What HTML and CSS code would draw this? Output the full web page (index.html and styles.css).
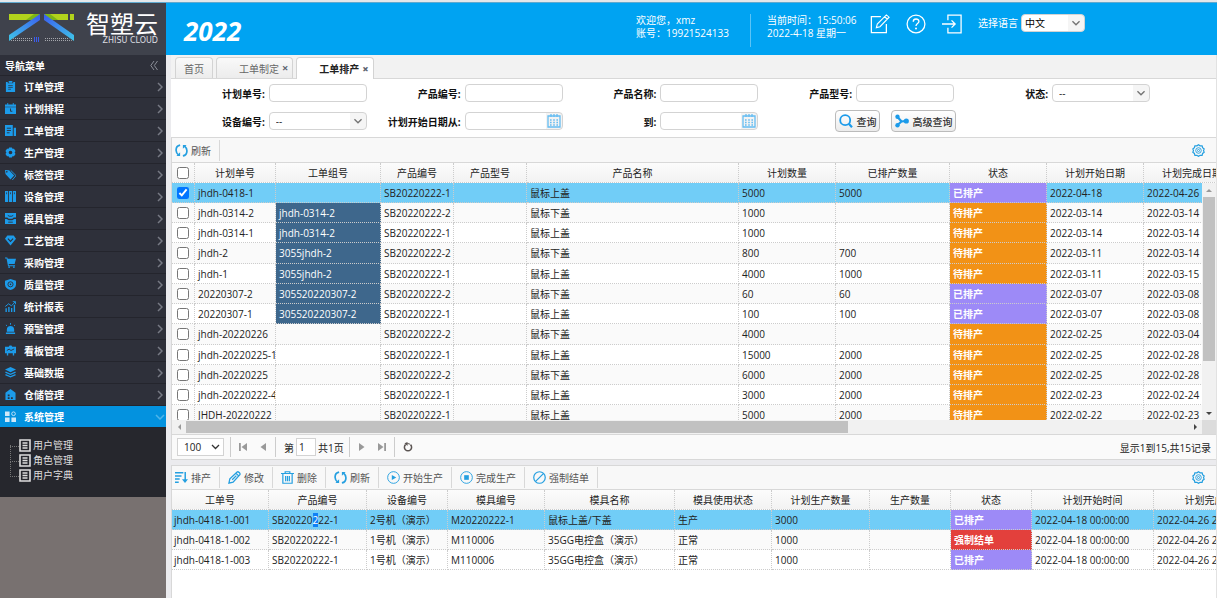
FILE: index.html
```html
<!DOCTYPE html>
<html lang="zh-CN">
<head>
    <meta charset="UTF-8">
    <title>智塑云</title>
    <link rel="stylesheet" href="styles.css">
</head>
<body>

<!-- shared icons -->
<svg class="symbols" aria-hidden="true">
    <symbol id="i-right" viewBox="0 0 6 10"><path d="M1 1l4 4-4 4" fill="none" stroke="currentColor" stroke-width="1.5"/></symbol>
    <symbol id="i-refresh" viewBox="0 0 14 14"><path d="M5.5 1.2C2.8 1.7 1 4 1.2 7c.1 2 1 3.600 2.500 4.800M8.500 12.800c2.700-.5 4.500-2.800 4.300-5.800-.1-2-1-3.600-2.500-4.800" fill="none" stroke="currentColor" stroke-width="1.800"/><path d="M1.500 12.800h4V9zM12.500 1.200h-4V5z" fill="currentColor"/></symbol>
    <symbol id="i-gear" viewBox="0 0 14 14"><path d="M7 .8l1.700 1.200 2.200-.1.500 2.100 1.700 1.300L12.400 7l.7 1.900-1.700 1.300-.5 2.100-2.200-.1L7 13.300l-1.700-1.100-2.200.1-.5-2.100L.9 8.900 1.600 7 .9 5.300 2.600 4l.5-2.100 2.200.1z" fill="none" stroke="currentColor" stroke-width="1.300"/><circle cx="7" cy="7" r="3" fill="none" stroke="currentColor"/><circle cx="7" cy="7" r="1.100" fill="none" stroke="currentColor"/></symbol>
    <symbol id="i-page" viewBox="0 0 12 13"><path d="M1 1h10v11H1z" fill="none" stroke="currentColor" stroke-width="1.600"/><path d="M3.500 4h5M3.500 6.500h5M3.500 9h5" stroke="currentColor" stroke-width="1.400"/></symbol>
</svg>

<header class="top">
    <div class="logo">
        <svg class="logo_mark" viewBox="0 0 66 28" aria-hidden="true">
            <defs>
                <linearGradient id="lg1" x1="1" y1="0" x2="0" y2="1"><stop offset="0" stop-color="#3b5cf0"/><stop offset="1" stop-color="#3fc6e8"/></linearGradient>
                <linearGradient id="lg2" x1="0" y1="0" x2="1" y2="1"><stop offset="0" stop-color="#3b5cf0"/><stop offset="1" stop-color="#3fc6e8"/></linearGradient>
                <pattern id="dots" width="2" height="2" patternUnits="userSpaceOnUse"><rect width="1" height="1" fill="#a5a7ad"/></pattern>
            </defs>
            <path d="M0 0h31l-8 6H0z" fill="#b2d31c"/>
            <path d="M25 0h6l-8 6h-6z" fill="#7cb518"/>
            <path d="M31 0v6L0 27v-6z" fill="url(#lg1)"/>
            <path d="M35 0h24v6H43z" fill="#b2d31c"/>
            <path d="M35 0h6l8 6h-6z" fill="#7cb518"/>
            <path d="M61 0h4v6h-4z" fill="#b2d31c"/>
            <path d="M35 0v6l30 21v-6z" fill="url(#lg2)"/>
            <path d="M6 23h17v5H0zM35 23h23l7 5H35z" fill="url(#dots)"/>
            <path d="M25 23h1v5h-1zM27 23h1v5h-1zM29 23h1v5h-1z" fill="#3b5cf0"/>
        </svg>
        <div class="logo_text">
            <span class="logo_cn">智塑云</span>
            <span class="logo_en">ZHISU CLOUD</span>
        </div>
    </div>
    <div class="banner">
        <span class="year">2022</span>
        <div class="user_info">
            <span>欢迎您，xmz</span>
            <span>账号：19921524133</span>
        </div>
        <div class="time_info">
            <span>当前时间：15:50:06</span>
            <span>2022-4-18 星期一</span>
        </div>
        <div class="top_icons">
            <button type="button" aria-label="修改密码"><svg viewBox="0 0 22 22"><path d="M12 3H1.500v17.500H18V11" fill="none" stroke="#fff" stroke-width="1.400"/><path d="M7 15l1-4L18 1l3 2.500L11 14zM16 3l3 2.500M7 15l4-1" fill="none" stroke="#fff" stroke-width="1.200"/></svg></button>
            <button type="button" aria-label="帮助"><svg viewBox="0 0 22 22"><circle cx="11" cy="11" r="9.800" fill="none" stroke="#fff" stroke-width="1.400"/><path d="M8 8.500c0-4 6.200-3.800 6.200-.3 0 2.400-3.200 2.300-3.200 5" fill="none" stroke="#fff" stroke-width="1.500"/><circle cx="11" cy="16" r="1.100" fill="#fff"/></svg></button>
            <button type="button" aria-label="退出"><svg viewBox="0 0 22 22"><path d="M6.500 7V1.200H21v19.600H6.500V15M0 11h14M10.500 7l4 4-4 4" fill="none" stroke="#fff" stroke-width="1.400"/></svg></button>
        </div>
        <label for="lang">选择语言</label>
        <select id="lang" class="lang"><option>中文</option></select>
    </div>
</header>

<div class="layout">
    <aside class="side">
        <div class="side_title"><span>导航菜单</span><button type="button" aria-label="收起"><svg viewBox="0 0 8 9"><path d="M4 0L.8 4.500 4 9M7.500 0L4.300 4.500l3.200 4.500" fill="none" stroke="#8c8f99"/></svg></button></div>
        <nav class="menu">
            <button type="button"><svg class="mi" viewBox="0 0 12 12"><path d="M1 1h2v1.500h6V1h2v11H1z"/><path d="M4 0h4v2H4z"/><path d="M3.500 5h5M3.500 7h5M3.500 9h3" stroke="#2e303a" stroke-width=".8"/></svg>订单管理<svg class="go"><use href="#i-right"/></svg></button>
            <button type="button"><svg class="mi" viewBox="0 0 12 12"><path d="M0 1.500h2.500V0h1v1.500h5V0h1v1.500H12V4H0zM0 4.700h12V12H0z"/><path d="M6 6v3h2" stroke="#2e303a" fill="none"/></svg>计划排程<svg class="go"><use href="#i-right"/></svg></button>
            <button type="button"><svg class="mi" viewBox="0 0 12 12"><path d="M0 0h8.500v12H0zM9.500 3H12v9H9.500z"/><path d="M2 3.500h4.500M2 6h4.500M2 8.500h3" stroke="#2e303a"/></svg>工单管理<svg class="go"><use href="#i-right"/></svg></button>
            <button type="button"><svg class="mi" viewBox="0 0 12 12"><path fill-rule="evenodd" d="M4.500.5h3l.6 1.500 1.700-.2L11.500 4.400l-1 1.600 1 1.600-1.700 2.600-1.700-.2-.6 1.500h-3L3.900 10l-1.700.2L.5 7.600l1-1.600-1-1.600 1.700-2.600 1.700.2zM6 4a2 2 0 100 4 2 2 0 000-4z"/></svg>生产管理<svg class="go"><use href="#i-right"/></svg></button>
            <button type="button"><svg class="mi" viewBox="0 0 12 12"><path fill-rule="evenodd" d="M0 1l4.500.3L10 7l-4 4.500L.5 5.500zM2 2.200a.9.9 0 100 1.800.9.900 0 000-1.800z"/><path d="M6.300 1.500L12 7.200 8 12" fill="none" stroke="#1c9bea"/></svg>标签管理<svg class="go"><use href="#i-right"/></svg></button>
            <button type="button"><svg class="mi" viewBox="0 0 12 12"><path d="M0 0h3.400v12H0zM4.300 0h3.400v12H4.300zM8.600 0H12v12H8.600z"/><path d="M1.700 1.500v2M6 1.500v2M10.300 1.500v2" stroke="#2e303a" stroke-width=".8"/></svg>设备管理<svg class="go"><use href="#i-right"/></svg></button>
            <button type="button"><svg class="mi" viewBox="0 0 12 12"><path d="M0 0h12v5H9.500L8 6.200H4L2.500 5H0zM0 6.500h2L4 8h4l2-1.500h2V12H0z"/><path d="M3 2.500l1.500 1h3l1.500-1M3.500 10h5" stroke="#2e303a" fill="none"/></svg>模具管理<svg class="go"><use href="#i-right"/></svg></button>
            <button type="button"><svg class="mi" viewBox="0 0 12 12"><path d="M2.500.5h7L12 4 6 11.500 0 4z"/><path d="M3.200 4L6 7l2.800-3" stroke="#2e303a" stroke-width="1.200" fill="none"/></svg>工艺管理<svg class="go"><use href="#i-right"/></svg></button>
            <button type="button"><svg class="mi" viewBox="0 0 12 12"><path d="M0 .5h2.500L3 2h9l-1.500 5.500H4L4.300 9H11v1H3.300L1.700 1.500H0z"/><circle cx="4.500" cy="11" r="1"/><circle cx="9.700" cy="11" r="1"/></svg>采购管理<svg class="go"><use href="#i-right"/></svg></button>
            <button type="button"><svg class="mi" viewBox="0 0 12 12"><path d="M6 0l6 2v4c0 3-2.500 5-6 6C2.500 11 0 9 0 6V2z"/><circle cx="6" cy="5.800" r="2.800" fill="none" stroke="#2e303a"/><circle cx="6" cy="5.800" r=".9" fill="#2e303a"/></svg>质量管理<svg class="go"><use href="#i-right"/></svg></button>
            <button type="button"><svg class="mi" viewBox="0 0 12 12"><path d="M.5 8H2v4H.5zM3.500 6.500H5V12H3.500zM6.500 7.500H8V12H6.500zM9.500 4H11v8H9.500z"/><path d="M.3 6L4 3l3 2.300L11 1M8.500.7H11.500V3.500" fill="none" stroke="#1c9bea"/></svg>统计报表<svg class="go"><use href="#i-right"/></svg></button>
            <button type="button"><svg class="mi" viewBox="0 0 12 12"><path d="M2 9.500V7c0-5 8-5 8 0v2.500zM1 10.300h10V12H1zM5.500 0h1v2h-1z"/><path d="M1 2l1.200 1.200M11 2L9.800 3.200" stroke="#1c9bea"/></svg>预警管理<svg class="go"><use href="#i-right"/></svg></button>
            <button type="button"><svg class="mi" viewBox="0 0 12 12"><path d="M0 2h4l1-1.500h2L8 2h4v7H0zM2 9h1.500v2.500H2zM8.500 9H10v2.500H8.500z"/><path d="M2 6l2.500-1.500L6.500 6 10 4.300" stroke="#2e303a" fill="none"/></svg>看板管理<svg class="go"><use href="#i-right"/></svg></button>
            <button type="button"><svg class="mi" viewBox="0 0 12 12"><path d="M6 0l6 2.800-6 2.800L0 2.800z"/><path d="M.5 5.500L6 8l5.500-2.500M.5 8.300L6 10.800l5.500-2.500" fill="none" stroke="#1c9bea" stroke-width="1.400"/></svg>基础数据<svg class="go"><use href="#i-right"/></svg></button>
            <button type="button"><svg class="mi" viewBox="0 0 12 12"><path d="M6 0l5.500 4v8H.5V4z"/><path d="M3 6h2v1.800H3zM3 9h2v1.800H3zM6.500 9h2v1.800h-2z" fill="#2e303a"/></svg>仓储管理<svg class="go"><use href="#i-right"/></svg></button>
            <button type="button" class="open"><svg class="mi" viewBox="0 0 12 12"><path d="M0 .5h5v5H0zM0 7h5v5H0zM7 7h5v5H7z"/><circle cx="9.300" cy="3" r="2" fill="none" stroke="#cfe8f8"/></svg>系统管理<svg class="go down"><use href="#i-right"/></svg></button>
        </nav>
        <ul class="tree">
            <li><a href="#"><svg><use href="#i-page"/></svg>用户管理</a></li>
            <li><a href="#"><svg><use href="#i-page"/></svg>角色管理</a></li>
            <li><a href="#"><svg><use href="#i-page"/></svg>用户字典</a></li>
        </ul>
    </aside>

    <main class="main">
        <div class="tabs">
            <button type="button" class="tab">首页</button>
            <button type="button" class="tab closable">工单制定<b>×</b></button>
            <button type="button" class="tab closable active">工单排产<b>×</b></button>
        </div>

        <form class="search">
            <div class="field"><label for="plan_no">计划单号:</label><input type="text" id="plan_no"></div>
            <div class="field"><label for="prod_no">产品编号:</label><input type="text" id="prod_no"></div>
            <div class="field"><label for="prod_name">产品名称:</label><input type="text" id="prod_name"></div>
            <div class="field"><label for="prod_type">产品型号:</label><input type="text" id="prod_type"></div>
            <div class="field"><label for="state">状态:</label><select id="state"><option>--</option></select></div>
            <div class="field"><label for="device">设备编号:</label><select id="device"><option>--</option></select></div>
            <div class="field"><label for="date_from">计划开始日期从:</label><input type="text" id="date_from" class="date"></div>
            <div class="field"><label for="date_to">到:</label><input type="text" id="date_to" class="date"></div>
            <div class="search_buttons">
                <button type="button"><svg viewBox="0 0 14 14"><circle cx="6.200" cy="6.200" r="5" fill="none" stroke="#1c9bea" stroke-width="1.800"/><path d="M9.800 9.800L13 13.200" stroke="#1c9bea" stroke-width="2.200"/></svg>查询</button>
                <button type="button"><svg viewBox="0 0 14 14"><path d="M2.500 3l4 4.500-4 3.500M6.500 7.500L12 6.800" fill="none" stroke="#1c9bea" stroke-width="2.200"/><circle cx="2.500" cy="2.800" r="2.200" fill="#1c9bea"/><circle cx="2.500" cy="11.300" r="2.200" fill="#1c9bea"/><circle cx="11.300" cy="7" r="2.600" fill="#1c9bea"/></svg>高级查询</button>
            </div>
        </form>

        <section class="panel plans">
            <div class="toolbar">
                <button type="button"><svg><use href="#i-refresh"/></svg>刷新</button>
                <button type="button" class="setting" aria-label="设置"><svg><use href="#i-gear"/></svg></button>
            </div>
            <div class="grid_head">
                <table class="grid plan_grid">
                    <colgroup><col class="w23"><col class="w81"><col class="w105"><col class="w73"><col class="w73"><col class="w212"><col class="w97"><col class="w114"><col class="w97"><col class="w97"><col class="w97"></colgroup>
                    <thead><tr><th><input type="checkbox" aria-label="全选"></th><th>计划单号</th><th>工单组号</th><th>产品编号</th><th>产品型号</th><th>产品名称</th><th>计划数量</th><th>已排产数量</th><th>状态</th><th>计划开始日期</th><th>计划完成日期</th></tr></thead>
                </table>
            </div>
            <div class="grid_body">
                <div class="grid_view">
                    <table class="grid plan_grid">
                        <colgroup><col class="w23"><col class="w81"><col class="w105"><col class="w73"><col class="w73"><col class="w212"><col class="w97"><col class="w114"><col class="w97"><col class="w97"><col class="w97"></colgroup>
                        <tbody>
                        <tr class="selected"><td><input type="checkbox" aria-label="选择" checked></td><td>jhdh-0418-1</td><td></td><td>SB20220222-1</td><td></td><td>鼠标上盖</td><td>5000</td><td>5000</td><td class="done">已排产</td><td>2022-04-18</td><td>2022-04-26</td></tr>
                        <tr><td><input type="checkbox" aria-label="选择"></td><td>jhdh-0314-2</td><td class="group">jhdh-0314-2</td><td>SB20220222-2</td><td></td><td>鼠标下盖</td><td>1000</td><td></td><td class="wait">待排产</td><td>2022-03-14</td><td>2022-03-14</td></tr>
                        <tr><td><input type="checkbox" aria-label="选择"></td><td>jhdh-0314-1</td><td class="group">jhdh-0314-2</td><td>SB20220222-1</td><td></td><td>鼠标上盖</td><td>1000</td><td></td><td class="wait">待排产</td><td>2022-03-14</td><td>2022-03-14</td></tr>
                        <tr><td><input type="checkbox" aria-label="选择"></td><td>jhdh-2</td><td class="group">3055jhdh-2</td><td>SB20220222-2</td><td></td><td>鼠标下盖</td><td>800</td><td>700</td><td class="wait">待排产</td><td>2022-03-11</td><td>2022-03-14</td></tr>
                        <tr><td><input type="checkbox" aria-label="选择"></td><td>jhdh-1</td><td class="group">3055jhdh-2</td><td>SB20220222-1</td><td></td><td>鼠标上盖</td><td>4000</td><td>1000</td><td class="wait">待排产</td><td>2022-03-11</td><td>2022-03-15</td></tr>
                        <tr><td><input type="checkbox" aria-label="选择"></td><td>20220307-2</td><td class="group">305520220307-2</td><td>SB20220222-2</td><td></td><td>鼠标下盖</td><td>60</td><td>60</td><td class="done">已排产</td><td>2022-03-07</td><td>2022-03-08</td></tr>
                        <tr><td><input type="checkbox" aria-label="选择"></td><td>20220307-1</td><td class="group">305520220307-2</td><td>SB20220222-1</td><td></td><td>鼠标上盖</td><td>100</td><td>100</td><td class="done">已排产</td><td>2022-03-07</td><td>2022-03-08</td></tr>
                        <tr><td><input type="checkbox" aria-label="选择"></td><td>jhdh-20220226</td><td></td><td>SB20220222-2</td><td></td><td>鼠标下盖</td><td>4000</td><td></td><td class="wait">待排产</td><td>2022-02-25</td><td>2022-03-04</td></tr>
                        <tr><td><input type="checkbox" aria-label="选择"></td><td>jhdh-20220225-1</td><td></td><td>SB20220222-1</td><td></td><td>鼠标上盖</td><td>15000</td><td>2000</td><td class="wait">待排产</td><td>2022-02-25</td><td>2022-02-28</td></tr>
                        <tr><td><input type="checkbox" aria-label="选择"></td><td>jhdh-20220225</td><td></td><td>SB20220222-2</td><td></td><td>鼠标下盖</td><td>6000</td><td>2000</td><td class="wait">待排产</td><td>2022-02-25</td><td>2022-02-28</td></tr>
                        <tr><td><input type="checkbox" aria-label="选择"></td><td>jhdh-20220222-4</td><td></td><td>SB20220222-1</td><td></td><td>鼠标上盖</td><td>3000</td><td>2000</td><td class="wait">待排产</td><td>2022-02-23</td><td>2022-02-24</td></tr>
                        <tr><td><input type="checkbox" aria-label="选择"></td><td>JHDH-20220222</td><td></td><td>SB20220222-1</td><td></td><td>鼠标上盖</td><td>5000</td><td>2000</td><td class="wait">待排产</td><td>2022-02-22</td><td>2022-02-23</td></tr>
                        </tbody>
                    </table>
                </div>
                <div class="vscroll"><i class="arrow up"></i><span></span><i class="arrow dn"></i></div>
            </div>
            <div class="hscroll"><i class="arrow lt"></i><div class="track"><span></span></div><i class="arrow rt"></i><b></b></div>
            <div class="pager">
                <select class="page_size" aria-label="每页条数"><option>100</option></select>
                <div class="pager_group">
                    <button type="button" aria-label="首页"><svg viewBox="0 0 8 8"><path d="M0 0h1.800v8H0zM8 0v8L2.500 4z"/></svg></button>
                    <button type="button" aria-label="上一页"><svg viewBox="0 0 8 8"><path d="M7 0v8L1.500 4z"/></svg></button>
                </div>
                <div class="pager_group page_input"><label for="page_no">第</label><input type="text" id="page_no" value="1"><span>共1页</span></div>
                <div class="pager_group">
                    <button type="button" aria-label="下一页"><svg viewBox="0 0 8 8"><path d="M1 0v8l5.500-4z"/></svg></button>
                    <button type="button" aria-label="末页"><svg viewBox="0 0 8 8"><path d="M0 0v8l5.500-4zM6.200 0H8v8H6.200z"/></svg></button>
                </div>
                <div class="pager_group">
                    <button type="button" class="reload" aria-label="刷新"><svg viewBox="0 0 10 10"><path d="M7.500 2.600A3.600 3.600 0 112.500 2.600" fill="none" stroke="#5b5452" stroke-width="1.500"/><path d="M2.500 2.600C4 1.400 6 1.400 7 2.300" fill="none" stroke="#5b5452"/><path d="M4.500 0v4L1.500 1.200z" fill="#5b5452"/></svg></button>
                </div>
                <span class="total">显示1到15,共15记录</span>
            </div>
        </section>

        <section class="panel orders">
            <div class="toolbar">
                <button type="button"><svg viewBox="0 0 14 14"><path d="M0 2h9M0 5.300h7M0 8.600h5M0 12h4M11 1v9" fill="none" stroke="currentColor" stroke-width="1.600"/><path d="M7.500 9h6.500l-3.200 4z" fill="currentColor"/></svg>排产</button>
                <button type="button"><svg viewBox="0 0 14 14"><path d="M1 13l1-4.500L9.800 1c1.200-.8 3.800 1.500 3 3L5.500 12zM8.500 2.500l3.300 3M4.500 9.500L9 5" fill="none" stroke="currentColor" stroke-width="1.400"/></svg>修改</button>
                <button type="button"><svg viewBox="0 0 14 14"><path d="M0 2.700h14M4.500 2.500V.8h5v1.700M2 3v10.200h10V3M5 5.500v5.500M7 5.500v5.500M9 5.500v5.500" fill="none" stroke="currentColor" stroke-width="1.300"/></svg>删除</button>
                <button type="button"><svg><use href="#i-refresh"/></svg>刷新</button>
                <button type="button"><svg viewBox="0 0 14 14"><circle cx="7" cy="7" r="6.300" fill="none" stroke="currentColor"/><path d="M5.200 4.200v5.600L10 7z" fill="currentColor"/></svg>开始生产</button>
                <button type="button"><svg viewBox="0 0 14 14"><circle cx="7" cy="7" r="6.300" fill="none" stroke="currentColor"/><path d="M4.500 4.500h5v5h-5z" fill="currentColor"/></svg>完成生产</button>
                <button type="button"><svg viewBox="0 0 14 14"><circle cx="7" cy="7" r="6.200" fill="none" stroke="currentColor" stroke-width="1.300"/><path d="M2.800 11.200l8.400-8.400" stroke="currentColor" stroke-width="1.300"/></svg>强制结单</button>
                <button type="button" class="setting" aria-label="设置"><svg><use href="#i-gear"/></svg></button>
            </div>
            <div class="grid_view">
                <table class="grid order_grid">
                    <colgroup><col class="w97"><col class="w98"><col class="w81"><col class="w97"><col class="w130"><col class="w97"><col class="w98"><col class="w81"><col class="w81"><col class="w122"><col class="w122"></colgroup>
                    <thead><tr><th>工单号</th><th>产品编号</th><th>设备编号</th><th>模具编号</th><th>模具名称</th><th>模具使用状态</th><th>计划生产数量</th><th>生产数量</th><th>状态</th><th>计划开始时间</th><th>计划完成时间</th></tr></thead>
                    <tbody>
                    <tr class="selected"><td>jhdh-0418-1-001</td><td>SB20220<mark>2</mark>22-1</td><td>2号机（演示）</td><td>M20220222-1</td><td>鼠标上盖/下盖</td><td>生产</td><td>3000</td><td></td><td class="done">已排产</td><td>2022-04-18 00:00:00</td><td>2022-04-26 23:59:59</td></tr>
                    <tr><td>jhdh-0418-1-002</td><td>SB20220222-1</td><td>1号机（演示）</td><td>M110006</td><td>35GG电控盒（演示）</td><td>正常</td><td>1000</td><td></td><td class="forced">强制结单</td><td>2022-04-18 00:00:00</td><td>2022-04-26 23:59:59</td></tr>
                    <tr><td>jhdh-0418-1-003</td><td>SB20220222-1</td><td>1号机（演示）</td><td>M110006</td><td>35GG电控盒（演示）</td><td>正常</td><td>1000</td><td></td><td class="done">已排产</td><td>2022-04-18 00:00:00</td><td>2022-04-26 23:59:59</td></tr>
                    </tbody>
                </table>
            </div>
        </section>
    </main>
</div>

</body>
</html>
```

FILE: styles.css
```css
* {
    box-sizing: border-box;
}

html, body {
    height: 100%;
    margin: 0;
}

body {
    display: flex;
    flex-direction: column;
    border-top: 2px solid #e4e7ea;
    font-family: "Open Sans", "Noto Sans CJK SC", sans-serif;
    font-size: 10px;
    color: #222;
    overflow: hidden;
}

button, input, select {
    font: inherit;
    color: inherit;
    margin: 0;
}

button {
    padding: 0;
    border: none;
    background: none;
    white-space: nowrap;
}

svg {
    display: block;
    flex: none;
}

.symbols {
    position: absolute;
    width: 0;
    height: 0;
}

/* header */
.top {
    display: flex;
    flex: none;
    height: 53px;
    border-top: 1px solid #5fa9cf;
    background-color: #00a3f2;
}

.logo {
    display: flex;
    gap: 11px;
    width: 166px;
    padding: 9px 8px 0 9px;
    background-color: #3f424c;
}

.logo_mark {
    width: 66px;
    height: 28px;
    margin-top: 2px;
}

.logo_text {
    display: flex;
    flex-direction: column;
    color: #fff;
}

.logo_cn {
    font-size: 24px;
    line-height: 24px;
}

.logo_en {
    font-family: "DejaVu Sans", sans-serif;
    font-size: 8px;
    line-height: 10px;
    text-align: right;
    color: #dcdde0;
}

.banner {
    display: flex;
    flex: 1;
    align-items: flex-start;
    padding: 11px 132px 0 18px;
    color: #fff;
}

.year {
    margin: 0 auto 0 0;
    font-size: 26px;
    line-height: 34px;
    font-weight: bold;
    font-style: italic;
}

.user_info, .time_info {
    display: flex;
    flex-direction: column;
    width: 114px;
    height: 33px;
    line-height: 13px;
}

.time_info {
    width: 120px;
    padding-left: 16px;
    border-left: 1px solid #5cc4f6;
}

.top_icons {
    display: flex;
    gap: 16px;
    padding-right: 16px;
}

.top_icons svg {
    width: 20px;
    height: 20px;
}

.banner label {
    width: 43px;
    line-height: 18px;
}

select {
    appearance: none;
    height: 18px;
    padding: 0 6px;
    border: 1px solid #d3d3d3;
    border-radius: 4px;
    outline: none;
    background: #fff url("data:image/svg+xml,%3Csvg xmlns='http://www.w3.org/2000/svg' viewBox='0 0 18 18'%3E%3Cpath fill='%23f5f5f5' d='M0 0h18v18H0z'/%3E%3Cpath d='M5 7l4 4 4-4' fill='none' stroke='%23777' stroke-width='1.6'/%3E%3C/svg%3E") right center / 16px 16px no-repeat;
}

.lang {
    width: 64px;
    padding: 0 3px;
    color: #000;
}

.layout {
    display: flex;
    flex: 1;
    min-height: 0;
}

/* left menu */
.side {
    flex: none;
    width: 166px;
    background-color: #787170;
    color: #fff;
}

.side_title {
    display: flex;
    align-items: center;
    justify-content: space-between;
    height: 21px;
    padding: 0 8px 0 5px;
    background-color: #2e303a;
    border-bottom: 1px solid #24252d;
    font-weight: bold;
}

.side_title svg {
    width: 8px;
    height: 9px;
}

.menu button {
    display: flex;
    align-items: center;
    width: 100%;
    height: 22px;
    padding: 0 3px 0 5px;
    background-color: #2e303a;
    border-bottom: 1px solid #24252d;
    font-weight: bold;
}

.menu .mi {
    width: 11px;
    height: 11px;
    margin-right: 8px;
    fill: #1c9bea;
}

.menu .go {
    width: 6px;
    height: 10px;
    margin-left: auto;
    color: #777a84;
}

.menu .open {
    background-color: #0392df;
}

.menu .open .mi {
    fill: #cfe8f8;
}

.menu .down {
    transform: rotate(90deg);
    color: #4fb5ea;
}

.tree {
    margin: 0;
    padding: 10px 0 14px 19px;
    list-style: none;
    background-color: #26272d;
}

.tree li {
    position: relative;
    height: 15px;
}

/* connector lines of the tree */
.tree li::before {
    content: "";
    position: absolute;
    left: -9px;
    top: -7px;
    width: 8px;
    height: 15px;
    border-left: 1px dotted #777;
    border-bottom: 1px dotted #777;
}

.tree li:first-child::before {
    top: 7px;
    height: 1px;
}

.tree a {
    display: flex;
    align-items: center;
    gap: 2px;
    line-height: 15px;
    color: #ddd;
    text-decoration: none;
}

.tree svg {
    width: 12px;
    height: 13px;
}

/* main area */
.main {
    display: flex;
    flex: 1;
    flex-direction: column;
    min-width: 0;
    border-left: 5px solid #ebebee;
    border-right: 1px solid #e2e2e2;
    background-color: #fff;
}

.tabs {
    display: flex;
    flex: none;
    align-items: flex-end;
    gap: 3px;
    height: 24px;
    padding-left: 4px;
    border-bottom: 1px solid #d8d8d8;
    background-color: #f2f2f2;
}

.tab {
    height: 21px;
    padding: 0 8px;
    border: 1px solid #d3d3d3;
    border-bottom: none;
    border-radius: 4px 4px 0 0;
    background-image: linear-gradient(#f9f9f9, #ececec);
    color: #666;
}

.closable {
    display: flex;
    align-items: center;
    gap: 3px;
    padding: 0 4px 0 22px;
}

.closable b {
    font-size: 11px;
    line-height: 12px;
    color: #5d6470;
}

.tab.active {
    height: 22px;
    margin-bottom: -1px;
    background: #fff;
    color: #222;
    font-weight: bold;
}

.search {
    display: grid;
    grid-template-columns: repeat(5, 1fr);
    align-content: start;
    flex: none;
    gap: 10px 0;
    height: 59px;
    padding: 5px 66px 0 0;
    border-bottom: 1px solid #d8d8d8;
}

.field {
    display: flex;
    align-items: center;
    justify-content: flex-end;
    gap: 4px;
    height: 18px;
}

.field label {
    font-weight: bold;
    color: #111;
}

.field input, .field select {
    width: 98px;
    height: 18px;
    border: 1px solid #d3d3d3;
    border-radius: 4px;
    outline: none;
}

.field .date {
    background: url("data:image/svg+xml,%3Csvg xmlns='http://www.w3.org/2000/svg' viewBox='0 0 16 16'%3E%3Cpath fill='%23f3f3f3' d='M0 0h16v16H0z'/%3E%3Cpath d='M2 3h12v11H2zM5 1v3M8 1v3M11 1v3' fill='none' stroke='%2365bdf2' stroke-width='1.3'/%3E%3Cpath d='M4 7h8M4 9.500h8M4 12h8' stroke='%2365bdf2' stroke-width='1.3' stroke-dasharray='1.600 1.600'/%3E%3C/svg%3E") right center / 16px 16px no-repeat;
}

.search_buttons {
    display: flex;
    grid-column: 4 / 6;
    gap: 11px;
    height: 22px;
    margin: -2px 0;
    padding-left: 77px;
}

.search_buttons button {
    display: flex;
    align-items: center;
    gap: 3px;
    padding: 0 3px;
    border: 1px solid #bbb;
    border-radius: 4px;
    background-image: linear-gradient(#fff, #ececec);
    color: #333;
    font-weight: 500;
}

.search_buttons svg {
    width: 14px;
    height: 14px;
}

.panel {
    display: flex;
    flex-direction: column;
    border-left: 1px solid #d8d8d8;
}

.plans {
    flex: 1;
    min-height: 0;
}

.orders {
    flex: none;
    min-height: 133px;
    margin-top: 5px;
    border-top: 1px solid #d8d8d8;
    box-shadow: 0 -5px 0 #ebebee;
}

.toolbar {
    display: flex;
    flex: none;
    align-items: center;
    height: 25px;
    border-bottom: 1px solid #d8d8d8;
    background-color: #f8f8f8;
}

.orders .toolbar {
    height: 24px;
}

.toolbar button {
    display: flex;
    align-items: center;
    gap: 3px;
    height: 21px;
    padding: 0 8px;
    border-right: 1px solid #d8d8d8;
    color: #555;
}

.toolbar button:first-child {
    padding-left: 3px;
}

.toolbar svg {
    width: 13px;
    height: 13px;
    color: #249fe0;
}

.toolbar .setting {
    margin-left: auto;
    padding-right: 11px;
    border: none;
}

/* data grids */
.grid {
    table-layout: fixed;
    border-spacing: 0;
}

.plan_grid {
    width: 1069px;
}

.order_grid {
    width: 1104px;
}

.w23 { width: 23px; }
.w73 { width: 73px; }
.w81 { width: 81px; }
.w97 { width: 97px; }
.w98 { width: 98px; }
.w105 { width: 105px; }
.w114 { width: 114px; }
.w122 { width: 122px; }
.w130 { width: 130px; }
.w212 { width: 212px; }

.grid th, .grid td {
    height: 20px;
    padding: 0 3px;
    border-right: 1px dotted #ccc;
    border-bottom: 1px dotted #ccc;
    line-height: 18px;
    white-space: nowrap;
    overflow: hidden;
}

.grid th {
    background-image: linear-gradient(#fcfcfc, #f2f2f2);
    font-weight: normal;
}

.orders .grid td:first-child {
    padding-left: 2px;
}

/* every fourth row takes one more pixel */
.plans .grid tr:nth-child(4n) td {
    height: 21px;
}

.grid input {
    display: block;
    width: 12px;
    height: 12px;
    margin: 0 2px;
}

.grid tbody tr:nth-child(even) {
    background-color: #fafafa;
}

.grid tbody .selected {
    background-color: #71cdf7;
}

.grid .group {
    background-color: #3e678c;
    color: #fff;
}

.grid .done, .grid .wait, .grid .forced {
    color: #fff;
    font-weight: bold;
}

.grid .done {
    background-color: #9d8af7;
}

.grid .wait {
    background-color: #f29216;
}

.grid .forced {
    background-color: #e3403c;
}

.grid mark {
    background-color: #0f80f5;
    color: #fff;
}

.grid_head, .grid_view {
    overflow: hidden;
}

.grid_head {
    flex: none;
}

.grid_body {
    display: flex;
    flex: 1;
    min-height: 0;
}

.grid_body .grid_view {
    flex: 1;
    min-width: 0;
}

/* scrollbars */
.vscroll {
    display: flex;
    flex-direction: column;
    align-items: center;
    width: 14px;
    background-color: #f1f1f1;
}

.vscroll span {
    width: 12px;
    height: 69%;
    background-color: #c1c1c1;
}

.arrow {
    flex: none;
    width: 0;
    height: 0;
    border: 3px solid transparent;
}

.up {
    margin: 3px 0 5px;
    border-bottom-color: #999;
}

.dn {
    margin: auto 0 2px;
    border-top-color: #444;
}

.hscroll {
    display: flex;
    flex: none;
    align-items: center;
    height: 14px;
    background-color: #f1f1f1;
}

.lt {
    margin: 0 5px 0 3px;
    border-right-color: #999;
}

.rt {
    margin: 0 2px 0 5px;
    border-left-color: #444;
}

.track {
    flex: 1;
}

.track span {
    display: block;
    width: 66%;
    height: 12px;
    background-color: #c1c1c1;
}

.hscroll b {
    width: 14px;
    height: 14px;
    background-color: #dcdcdc;
}

/* pager */
.pager {
    display: flex;
    flex: none;
    align-items: center;
    height: 26px;
    padding: 0 5px;
    border-top: 1px solid #d8d8d8;
    border-bottom: 1px solid #d8d8d8;
    background-color: #fafafa;
}

.page_size {
    width: 47px;
    margin-right: 6px;
    border-radius: 0;
    background-image: url("data:image/svg+xml,%3Csvg xmlns='http://www.w3.org/2000/svg' viewBox='0 0 16 16'%3E%3Cpath d='M5 6l3.500 3.500L12 6' fill='none' stroke='%23333' stroke-width='1.3'/%3E%3C/svg%3E");
}

.pager_group {
    display: flex;
    align-items: center;
    gap: 12px;
    height: 20px;
    padding: 0 8px;
    border-left: 1px solid #ccc;
}

.page_input {
    gap: 2px;
    padding: 0 5px 0 8px;
}

.page_input input {
    width: 20px;
    height: 18px;
    padding: 0 2px;
    border: 1px solid #d3d3d3;
}

.pager_group svg {
    width: 8px;
    height: 8px;
    fill: #999;
}

.reload svg {
    width: 10px;
    height: 10px;
}

.total {
    margin-left: auto;
}
```
